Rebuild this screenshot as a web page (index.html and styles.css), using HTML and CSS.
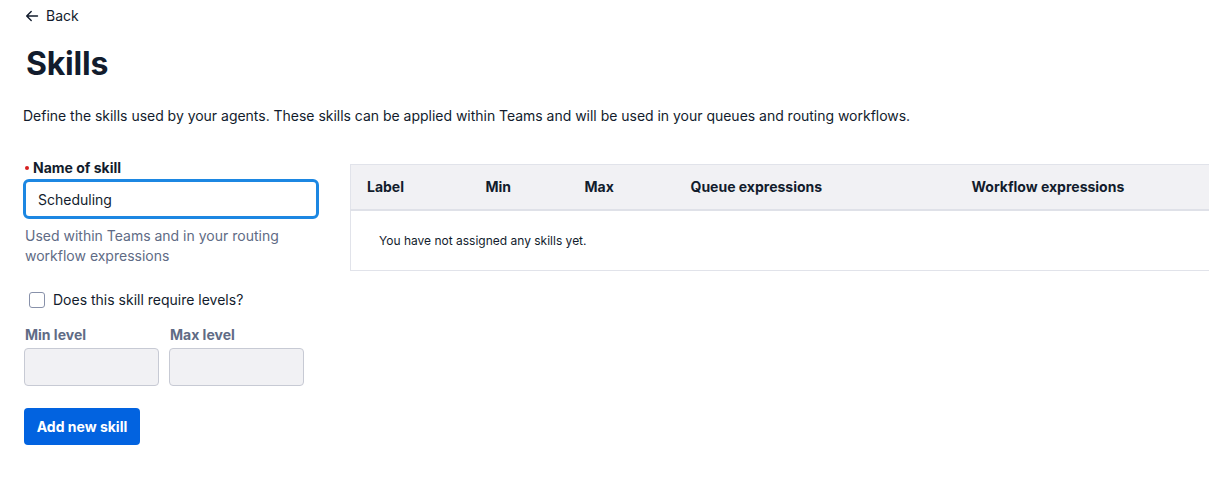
FILE: index.html
```html
<!DOCTYPE html>
<html lang="en">
<head>
<meta charset="utf-8">
<title>Skills</title>
<link rel="stylesheet" href="styles.css">
</head>
<body>
<div class="page">
  <a class="back" href="#">
    <svg class="back-icon" width="14" height="14" viewBox="0 0 14 14" aria-hidden="true">
      <path d="M12.5 7H1.8M6.2 2.5L1.7 7l4.5 4.5" fill="none" stroke="#121c2d" stroke-width="1.4" stroke-linecap="round" stroke-linejoin="round"/>
    </svg>
    <span>Back</span>
  </a>
  <h1 class="title">Skills</h1>
  <p class="intro">Define the skills used by your agents. These skills can be applied within Teams and will be used in your queues and routing workflows.</p>

  <div class="main">
    <form class="skill-form">
      <label class="label label-required" for="skill-name"><span class="req-dot"></span>Name of skill</label>
      <input class="text-input focused" id="skill-name" type="text" value="Scheduling">
      <p class="help">Used within Teams and in your routing workflow expressions</p>

      <label class="check-row">
        <span class="checkbox"></span>
        <span>Does this skill require levels?</span>
      </label>

      <div class="levels">
        <div class="level-field">
          <span class="label label-weak">Min level</span>
          <div class="level-input"></div>
        </div>
        <div class="level-field">
          <span class="label label-weak">Max level</span>
          <div class="level-input"></div>
        </div>
      </div>

      <button class="btn-primary" type="button">Add new skill</button>
    </form>

    <div class="table-wrap">
      <table class="skills-table">
        <thead>
          <tr>
            <th class="col-label">Label</th>
            <th class="col-min">Min</th>
            <th class="col-max">Max</th>
            <th class="col-queue">Queue expressions</th>
            <th class="col-workflow">Workflow expressions</th>
          </tr>
        </thead>
        <tbody>
          <tr>
            <td class="empty" colspan="5">You have not assigned any skills yet.</td>
          </tr>
        </tbody>
      </table>
    </div>
  </div>
</div>
</body>
</html>
```

FILE: styles.css
```css
* { box-sizing: border-box; }

html, body {
  margin: 0;
  padding: 0;
  background: #ffffff;
  overflow: hidden;
}

body {
  font-family: Inter, "Noto Sans", "Liberation Sans", sans-serif;
  color: #121c2d;
  font-size: 14px;
  line-height: 20px;
}

.page {
  padding: 6px 0 0 23px;
}

.back {
  display: inline-flex;
  align-items: center;
  gap: 7px;
  color: #121c2d;
  text-decoration: none;
  font-size: 14px;
  line-height: 20px;
  margin-left: 2px;
}

.back-icon { display: block; }

.title {
  font-size: 32px;
  line-height: 40px;
  font-weight: 700;
  margin: 16px 0 0 3px;
  letter-spacing: -0.2px;
}

.intro {
  margin: 22px 0 0 0;
  font-size: 14px;
  line-height: 20px;
  letter-spacing: -0.02px;
}

.main {
  display: flex;
  align-items: flex-start;
  gap: 31px;
  margin-top: 32px;
}

.skill-form {
  width: 296px;
  flex: none;
  display: flex;
  flex-direction: column;
}

.label {
  font-weight: 700;
  font-size: 14px;
  line-height: 20px;
}

.label-required {
  display: flex;
  align-items: center;
}

.req-dot {
  width: 4px;
  height: 4px;
  border-radius: 50%;
  background: #d61f1f;
  margin: 0 4px 0 2px;
}

.label-weak {
  color: #606b85;
}

.text-input {
  margin-top: 1px;
  width: 296px;
  height: 40px;
  border: 3px solid #1c87e2;
  border-radius: 6px;
  padding: 0 12px;
  font-family: inherit;
  font-size: 14px;
  color: #121c2d;
  background: #fff;
  outline: none;
}

.help {
  margin: 7px 0 0 2px;
  color: #606b85;
  font-size: 14px;
  line-height: 20px;
}

.check-row {
  display: flex;
  align-items: center;
  gap: 8px;
  margin: 24px 0 0 6px;
}

.checkbox {
  width: 16px;
  height: 16px;
  border: 1px solid #8891aa;
  border-radius: 3px;
  background: #fff;
}

.levels {
  display: flex;
  gap: 10px;
  margin: 15px 0 0 1px;
}

.level-field {
  display: flex;
  flex-direction: column;
  gap: 3px;
}

.level-field .label { padding-left: 1px; }

.level-input {
  width: 135px;
  height: 38px;
  background: #f1f1f4;
  border: 1px solid #c7cad4;
  border-radius: 4px;
}

.btn-primary {
  margin: 22px 0 0 1px;
  align-self: flex-start;
  height: 37px;
  width: 116px;
  border: none;
  border-radius: 4px;
  background: #0263e0;
  color: #fff;
  font-family: inherit;
  font-size: 14px;
  font-weight: 700;
  padding: 0;
}

.table-wrap {
  margin-top: 6px;
  flex: none;
  width: 960px;
}

.skills-table {
  width: 100%;
  border-collapse: collapse;
  table-layout: fixed;
  border: 1px solid #e1e3ea;
}

.skills-table th {
  background: #f1f1f4;
  height: 45px;
  text-align: left;
  font-weight: 700;
  font-size: 14px;
  padding: 0 0 0 16px;
  border-bottom: 2px solid #dfe1e8;
}

.col-label { width: 119px; }
.col-min { width: 99px; }
.col-max { width: 106px; }
.col-queue { width: 281px; }

.empty {
  height: 61px;
  font-size: 12px;
  padding: 1px 0 0 28px;
  color: #121c2d;
}
```
